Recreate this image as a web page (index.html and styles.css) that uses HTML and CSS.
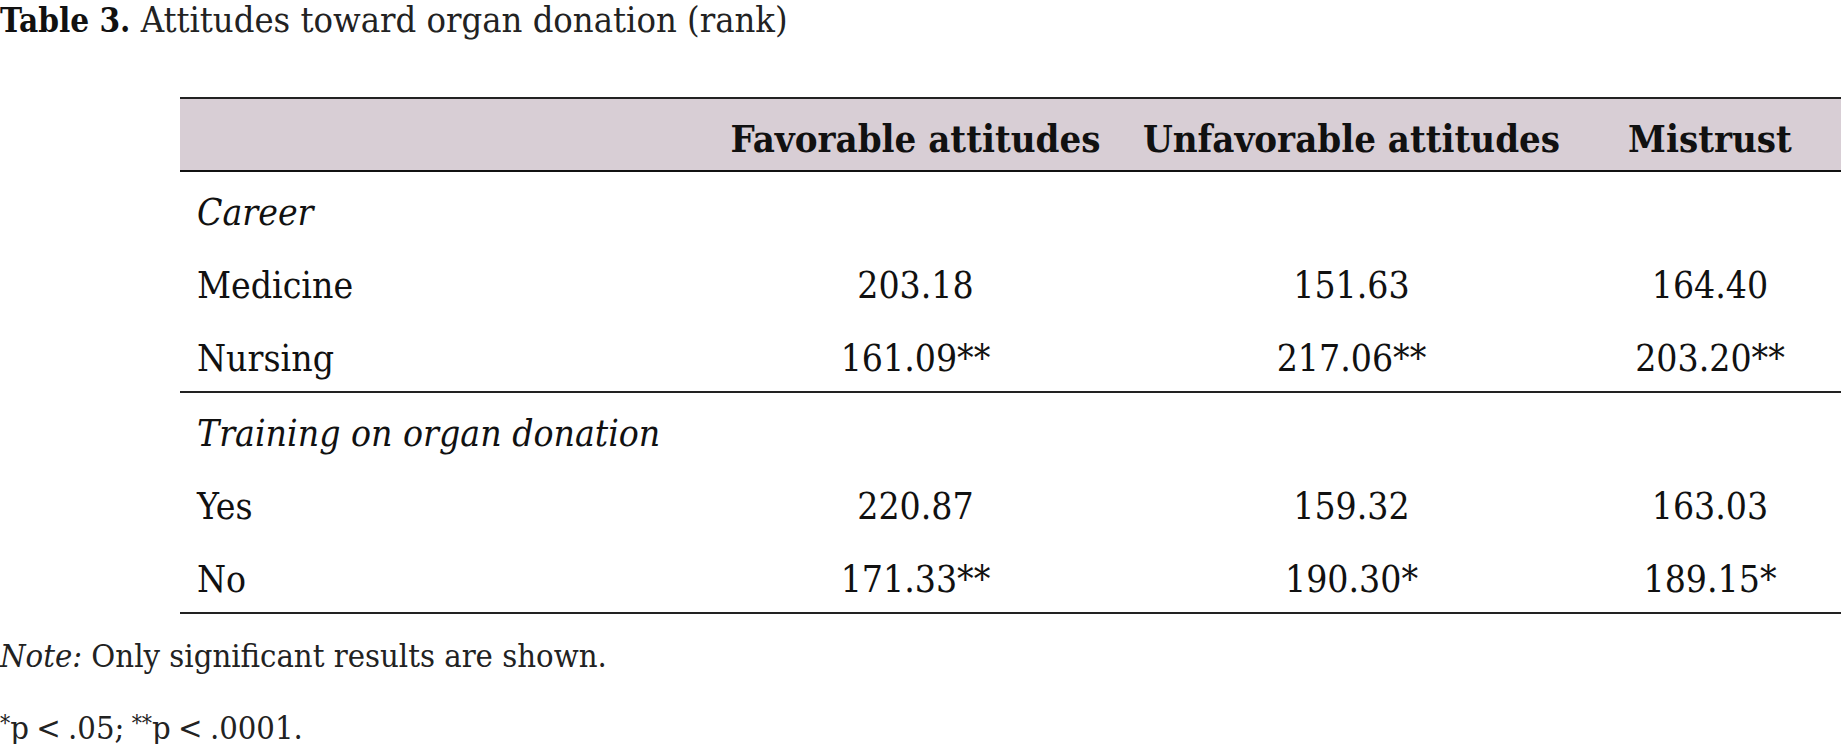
FILE: index.html
```html
<!DOCTYPE html>
<html>
<head>
<meta charset="utf-8">
<link rel="stylesheet" href="styles.css">
</head>
<body>
<div class="caption"><span class="label">Table 3.</span> Attitudes toward organ donation (rank)</div>
<table class="data">
  <colgroup>
    <col class="c1"><col class="c2"><col class="c3"><col class="c4">
  </colgroup>
  <thead>
    <tr><th></th><th>Favorable attitudes</th><th>Unfavorable attitudes</th><th>Mistrust</th></tr>
  </thead>
  <tbody>
    <tr><td class="group">Career</td><td></td><td></td><td></td></tr>
    <tr><td>Medicine</td><td>203.18</td><td>151.63</td><td>164.40</td></tr>
    <tr class="last"><td>Nursing</td><td>161.09**</td><td>217.06**</td><td>203.20**</td></tr>
  </tbody>
  <tbody>
    <tr><td class="group">Training on organ donation</td><td></td><td></td><td></td></tr>
    <tr><td>Yes</td><td>220.87</td><td>159.32</td><td>163.03</td></tr>
    <tr class="last"><td>No</td><td>171.33**</td><td>190.30*</td><td>189.15*</td></tr>
  </tbody>
</table>
<p class="note"><em>Note:</em> Only significant results are shown.</p>
<p class="note sig"><span class="star">*</span>p &lt; .05; <span class="star">**</span>p &lt; .0001.</p>
</body>
</html>
```

FILE: styles.css
```css
html, body {
  margin: 0;
  padding: 0;
  background: #fff;
  color: #111;
  overflow: hidden;
}
.caption {
  font-family: "DejaVu Serif Condensed", "DejaVu Serif", serif;
  font-size: 36px;
  line-height: 40px;
  height: 97px;
  color: #222;
}
.caption .label {
  font-weight: bold;
  font-size: 33px;
  color: #111;
}
.data {
  margin-left: 180px;
  width: 1661px;
  border-collapse: collapse;
  table-layout: fixed;
  font-family: "DejaVu Serif Condensed", "DejaVu Serif", serif;
  font-size: 37px;
}
.c1 { width: 527px; }
.c2 { width: 417px; }
.c3 { width: 455px; }
.c4 { width: 262px; }
.data thead th {
  background: #d8ced5;
  border-top: 2px solid #222;
  border-bottom: 2px solid #111;
  height: 63px;
  padding: 8px 0 0;
  text-align: center;
  font-weight: bold;
  font-size: 38px;
  line-height: 40px;
  vertical-align: middle;
}
.data td {
  height: 64px;
  padding: 9px 0 0;
  line-height: 40px;
  text-align: center;
  vertical-align: middle;
}
.data td:first-child {
  text-align: left;
  padding-left: 17px;
}
.data td.group {
  font-style: italic;
}
.data tr.last td {
  border-bottom: 2px solid #222;
}
.note {
  font-family: "DejaVu Serif Condensed", "DejaVu Serif", serif;
  font-size: 32.5px;
  margin: 0;
  line-height: 36px;
  padding-top: 24px;
  color: #222;
}
.note.sig {
  padding-top: 36px;
  word-spacing: -2px;
}
.note .star {
  font-size: 0.7em;
  vertical-align: 0.35em;
  line-height: 0;
}
```
